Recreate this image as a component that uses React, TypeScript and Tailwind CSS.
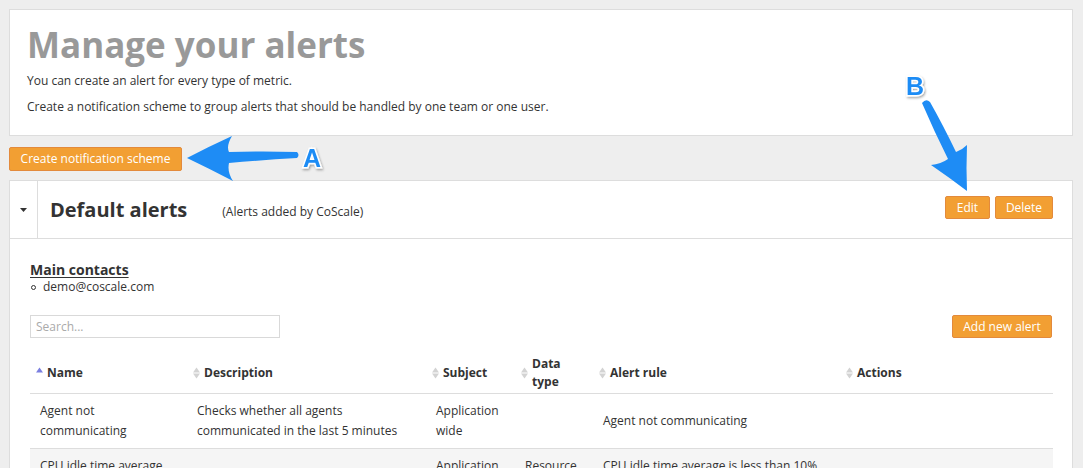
import React from "react";

const font = "font-['Open_Sans',_'Liberation_Sans',_sans-serif]";

type Col = { key: string; label: React.ReactNode; width: string; sort: "asc" | "none" };

const columns: Col[] = [
  { key: "name", label: "Name", width: "w-[157px]", sort: "asc" },
  { key: "desc", label: "Description", width: "w-[239px]", sort: "none" },
  { key: "subject", label: "Subject", width: "w-[89px]", sort: "none" },
  { key: "type", label: "Data type", width: "w-[78px]", sort: "none" },
  { key: "rule", label: "Alert rule", width: "w-[247px]", sort: "none" },
  { key: "actions", label: "Actions", width: "", sort: "none" },
];

const rows = [
  {
    name: "Agent not communicating",
    desc: "Checks whether all agents communicated in the last 5 minutes",
    subject: "Application wide",
    type: "",
    rule: "Agent not communicating",
  },
  {
    name: "CPU idle time average",
    desc: "",
    subject: "Application wide",
    type: "Resource",
    rule: "CPU idle time average is less than 10%",
  },
];

function SortIcon({ sort }: { sort: "asc" | "none" }) {
  if (sort === "asc") {
    return (
      <svg width="9" height="14" viewBox="0 0 9 14" className="shrink-0">
        <path d="M1 6.5 L4.5 1.5 L8 6.5 Z" fill="#7b7fe0" />
      </svg>
    );
  }
  return (
    <svg width="9" height="14" viewBox="0 0 9 14" className="shrink-0">
      <path d="M1 6.5 L4.5 1.5 L8 6.5 Z" fill="#d3d3d3" />
      <path d="M1 7.5 L4.5 12.5 L8 7.5 Z" fill="#d3d3d3" />
    </svg>
  );
}

function OrangeButton({ children, className = "" }: { children: React.ReactNode; className?: string }) {
  return (
    <button
      type="button"
      className={`rounded-[2px] border border-[#e38a3c] bg-[#f29f33] text-[12px] leading-none text-white ${className}`}
    >
      {children}
    </button>
  );
}

function Arrows() {
  return (
    <svg
      className="pointer-events-none absolute left-0 top-0"
      width="1083"
      height="468"
      viewBox="0 0 1083 468"
    >
      <defs>
        <filter id="shadow" x="-20%" y="-20%" width="140%" height="140%">
          <feDropShadow dx="1" dy="1.5" stdDeviation="1" floodColor="#000" floodOpacity="0.35" />
        </filter>
      </defs>
      {/* arrow A */}
      <path
        d="M187 158 Q210 146 232 136 Q226 146 229 152 Q262 151 297 152 Q300 155 297 158 Q262 160 229 163 Q227 172 233 181 Q210 169 187 158 Z"
        fill="#1e8cf5"
      />
      {/* arrow B */}
      <path
        d="M922 103 Q926 98 930 102 Q943 125 956 152 Q962 150 967 145 Q966 168 967 191 Q950 178 931 165 Q941 164 948 159 Q934 131 922 103 Z"
        fill="#1e8cf5"
      />
      <g filter="url(#shadow)">
        <text
          x="312"
          y="167"
          textAnchor="middle"
          fontFamily="'Liberation Sans', Arial, sans-serif"
          fontWeight="bold"
          fontSize="25"
          fill="#1e8cf5"
          stroke="#ffffff"
          strokeWidth="3"
          paintOrder="stroke"
        >
          A
        </text>
        <text
          x="915"
          y="95"
          textAnchor="middle"
          fontFamily="'Liberation Sans', Arial, sans-serif"
          fontWeight="bold"
          fontSize="25"
          fill="#1e8cf5"
          stroke="#ffffff"
          strokeWidth="3"
          paintOrder="stroke"
        >
          B
        </text>
      </g>
    </svg>
  );
}

export default function App() {
  return (
    <div className={`relative h-[468px] w-[1083px] overflow-hidden bg-[#eeeeee] ${font} text-[#333]`}>
      <div className="flex flex-col px-[9px] pt-[9px]">
        {/* intro card */}
        <div className="mr-[1px] h-[127px] border border-[#dddddd] bg-white px-[17px] pt-[15px]">
          <h1 className="text-[35px] font-bold leading-[40px] text-[#999999]">Manage your alerts</h1>
          <p className="mt-[6px] text-[12px] leading-[20px]">You can create an alert for every type of metric.</p>
          <p className="mt-[6px] text-[12px] leading-[20px]">
            Create a notification scheme to group alerts that should be handled by one team or one user.
          </p>
        </div>

        <div className="mt-[9px]">
          <OrangeButton className="h-[24px] w-[173px]">Create notification scheme</OrangeButton>
        </div>

        {/* alerts card */}
        <div className="mr-[1px] mt-[9px] border border-[#dddddd] bg-white">
          <div className="flex h-[58px] items-stretch border-b border-[#dddddd]">
            <div className="flex w-[28px] items-center justify-center border-r border-[#dddddd]">
              <svg width="7" height="4" viewBox="0 0 7 4">
                <path d="M0 0 L7 0 L3.5 4 Z" fill="#333" />
              </svg>
            </div>
            <div className="flex flex-1 items-center pl-[12px] pr-[19px]">
              <h2 className="text-[20px] font-bold leading-none text-[#333]">Default alerts</h2>
              <span className="ml-[35px] mt-[4px] text-[12px]">(Alerts added by CoScale)</span>
              <div className="mb-[4px] ml-auto flex gap-[5px]">
                <OrangeButton className="h-[23px] w-[45px]">Edit</OrangeButton>
                <OrangeButton className="h-[23px] w-[58px]">Delete</OrangeButton>
              </div>
            </div>
          </div>

          <div className="px-[20px] pt-[22px]">
            <h3 className="text-[14px] font-bold leading-[18px] underline underline-offset-2">Main contacts</h3>
            <ul className="pl-[1px]">
              <li className="flex items-center gap-[7px] text-[12px] leading-[16px]">
                <span className="h-[5px] w-[5px] rounded-full border border-[#333]" />
                demo@coscale.com
              </li>
            </ul>

            <div className="mt-[20px] flex items-center justify-between">
              <input
                placeholder="Search..."
                className="h-[23px] w-[250px] border border-[#d9d9d9] px-[5px] text-[12px] outline-none placeholder:text-[#aaa]"
              />
              <OrangeButton className="h-[23px] w-[100px]">Add new alert</OrangeButton>
            </div>

            <table className="mt-[15px] w-[1023px] table-fixed border-collapse text-[12px]">
              <thead>
                <tr className="h-[40px] border-b border-[#dddddd]">
                  {columns.map((c) => (
                    <th key={c.key} className={`${c.width} px-[5px] text-left align-middle`}>
                      <div className="flex items-center gap-[3px]">
                        <SortIcon sort={c.sort} />
                        <span className={`font-bold leading-[18px] ${c.key === "type" ? "w-[40px]" : ""}`}>{c.label}</span>
                      </div>
                    </th>
                  ))}
                </tr>
              </thead>
              <tbody>
                <tr className="h-[55px] border-b border-[#dddddd] bg-white">
                  <td className="px-[10px] align-middle leading-[20px]">{rows[0].name}</td>
                  <td className="px-[10px] align-middle leading-[20px]">{rows[0].desc}</td>
                  <td className="px-[10px] align-middle leading-[20px]">{rows[0].subject}</td>
                  <td className="px-[10px] align-middle leading-[20px]">{rows[0].type}</td>
                  <td className="px-[10px] align-middle leading-[20px]">{rows[0].rule}</td>
                  <td className="px-[10px]" />
                </tr>
                <tr className="h-[55px] bg-[#f5f5f5]">
                  <td className="px-[10px] pt-[7px] align-top leading-[20px]">{rows[1].name}</td>
                  <td className="px-[10px] pt-[7px] align-top leading-[20px]">{rows[1].desc}</td>
                  <td className="px-[10px] pt-[7px] align-top leading-[20px]">{rows[1].subject}</td>
                  <td className="px-[10px] pt-[7px] align-top leading-[20px]">{rows[1].type}</td>
                  <td className="px-[10px] pt-[7px] align-top leading-[20px]">{rows[1].rule}</td>
                  <td className="px-[10px]" />
                </tr>
              </tbody>
            </table>
          </div>
        </div>
      </div>
      <Arrows />
    </div>
  );
}
